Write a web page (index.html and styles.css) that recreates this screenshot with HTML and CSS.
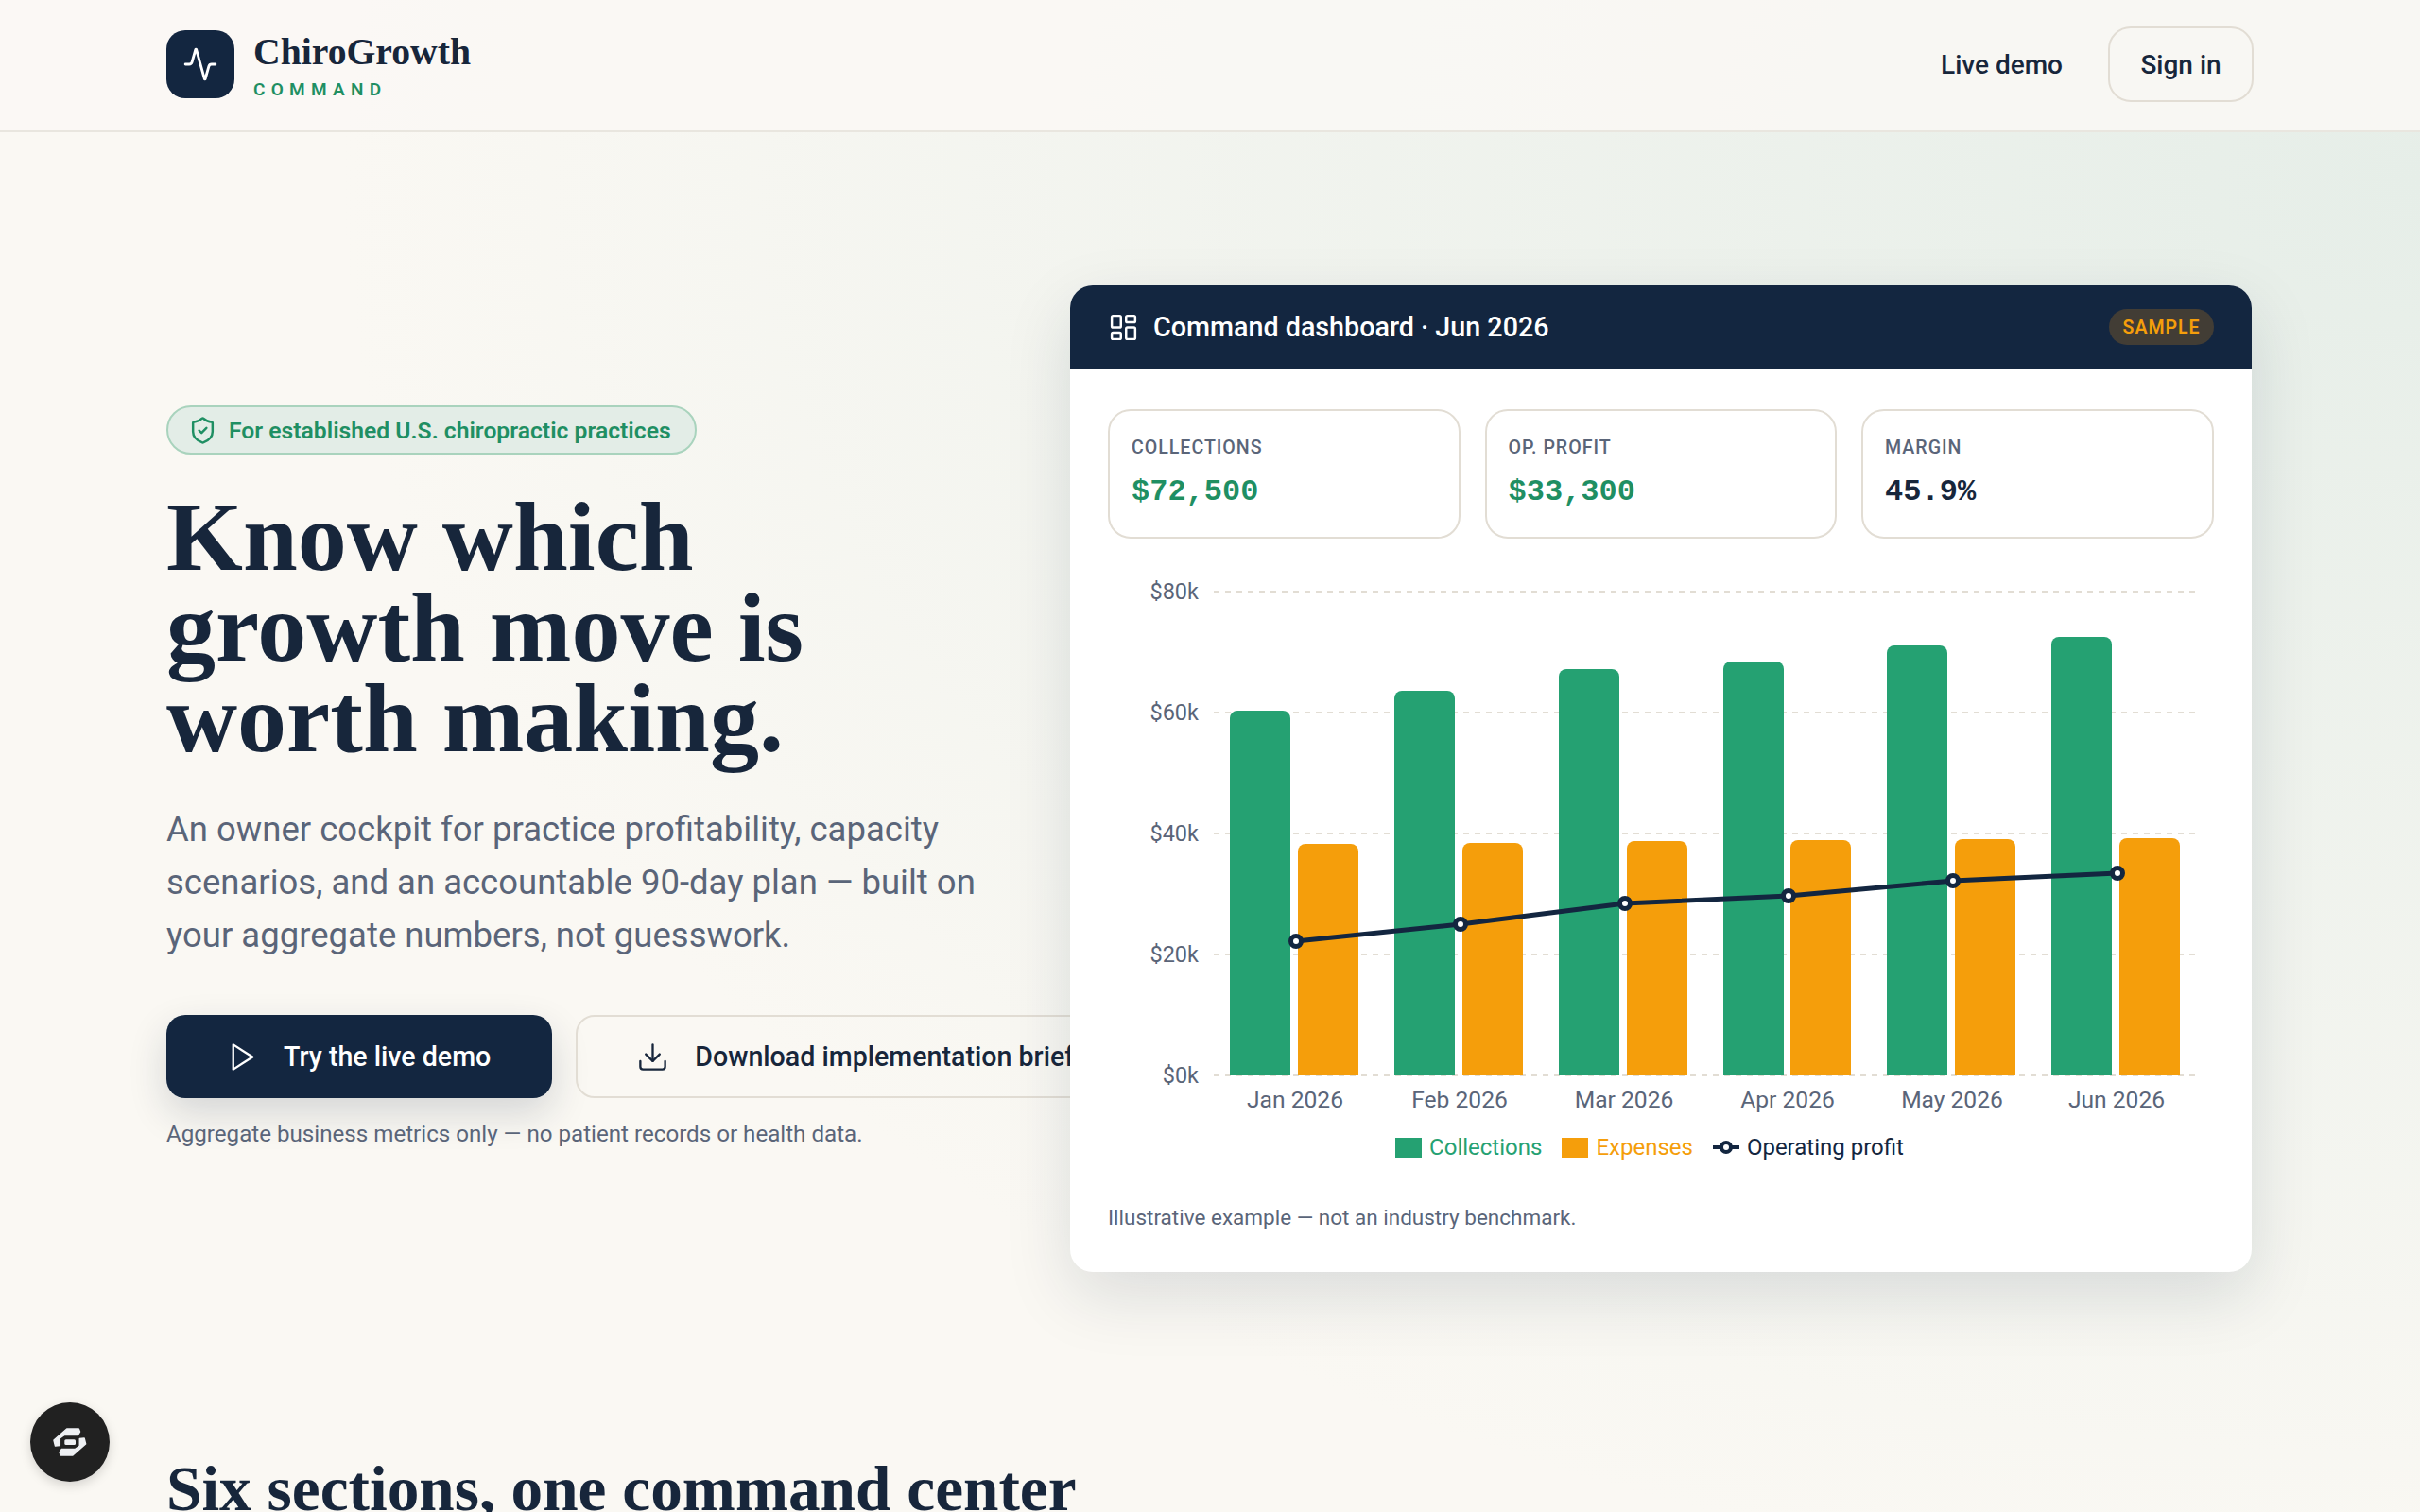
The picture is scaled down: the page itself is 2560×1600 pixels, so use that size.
FILE: index.html
```html
<!DOCTYPE html>
<html lang="en">
<head>
<meta charset="utf-8">
<title>ChiroGrowth Command</title>
<link rel="stylesheet" href="styles.css">
</head>
<body>
<header class="topbar">
  <a class="brand" href="#">
    <span class="brand-mark"><svg class="ico-logo" viewBox="0 0 24 24"><path d="M22 12h-2.48a2 2 0 0 0-1.93 1.46l-2.35 8.36a.25.25 0 0 1-.48 0L9.24 2.18a.25.25 0 0 0-.48 0l-2.35 8.36A2 2 0 0 1 4.49 12H2"/></svg></span>
    <span class="brand-text"><span class="brand-name">ChiroGrowth</span><span class="brand-sub">COMMAND</span></span>
  </a>
  <nav class="nav">
    <a class="nav-link" href="#">Live demo</a>
    <a class="nav-btn" href="#">Sign in</a>
  </nav>
</header>
<main>
  <section class="hero">
    <div class="hero-copy">
      <div class="pill"><svg class="ico ico-pill" viewBox="0 0 24 24"><path d="M20 13c0 5-3.500 7.500-7.660 8.950a1 1 0 0 1-.67-.01C7.500 20.500 4 18 4 13V6a1 1 0 0 1 1-1c2 0 4.500-1.200 6.240-2.720a1.170 1.170 0 0 1 1.520 0C14.510 3.810 17 5 19 5a1 1 0 0 1 1 1z"/><path d="m9 12 2 2 4-4"/></svg>For established U.S. chiropractic practices</div>
      <h1>Know which growth move is worth making.</h1>
      <p class="lead">An owner cockpit for practice profitability, capacity scenarios, and an accountable 90-day plan — built on your aggregate numbers, not guesswork.</p>
      <div class="actions">
        <a class="btn btn-primary" href="#"><svg class="ico" viewBox="0 0 24 24"><polygon points="6 3 20 12 6 21 6 3"/></svg>Try the live demo</a>
        <a class="btn btn-secondary" href="#"><svg class="ico" viewBox="0 0 24 24"><path d="M21 15v4a2 2 0 0 1-2 2H5a2 2 0 0 1-2-2v-4"/><polyline points="7 10 12 15 17 10"/><line x1="12" y1="15" x2="12" y2="3"/></svg>Download implementation brief</a>
      </div>
      <p class="fineprint">Aggregate business metrics only — no patient records or health data.</p>
    </div>
    <div class="dash">
      <div class="dash-head">
        <div class="dash-title"><svg class="ico" viewBox="0 0 24 24"><rect x="3" y="3" width="7" height="9" rx="1"/><rect x="14" y="3" width="7" height="5" rx="1"/><rect x="14" y="12" width="7" height="9" rx="1"/><rect x="3" y="16" width="7" height="5" rx="1"/></svg>Command dashboard · Jun 2026</div>
        <span class="badge">SAMPLE</span>
      </div>
      <div class="dash-body">
        <div class="stats">
          <div class="stat"><div class="stat-label">COLLECTIONS</div><div class="stat-value green">$72,500</div></div>
          <div class="stat"><div class="stat-label">OP. PROFIT</div><div class="stat-value green">$33,300</div></div>
          <div class="stat"><div class="stat-label">MARGIN</div><div class="stat-value">45.9%</div></div>
        </div>
        <svg class="chart" viewBox="1172 590 1170 590">
          <g class="grid">
            <line x1="1284" x2="2324" y1="626" y2="626"/>
            <line x1="1284" x2="2324" y1="754" y2="754"/>
            <line x1="1284" x2="2324" y1="882" y2="882"/>
            <line x1="1284" x2="2324" y1="1010" y2="1010"/>
            <line x1="1284" x2="2324" y1="1138" y2="1138"/>
          </g>
          <g class="axis-y">
            <text x="1268" y="634">$80k</text>
            <text x="1268" y="762">$60k</text>
            <text x="1268" y="890">$40k</text>
            <text x="1268" y="1018">$20k</text>
            <text x="1268" y="1146">$0k</text>
          </g>
          <g class="bars-c">
            <path d="M1301 1138V760a8 8 0 0 1 8-8h48a8 8 0 0 1 8 8v378z"/>
            <path d="M1475 1138V739a8 8 0 0 1 8-8h48a8 8 0 0 1 8 8v399z"/>
            <path d="M1649 1138V716a8 8 0 0 1 8-8h48a8 8 0 0 1 8 8v422z"/>
            <path d="M1823 1138V708a8 8 0 0 1 8-8h48a8 8 0 0 1 8 8v430z"/>
            <path d="M1996 1138V691a8 8 0 0 1 8-8h48a8 8 0 0 1 8 8v447z"/>
            <path d="M2170 1138V682a8 8 0 0 1 8-8h48a8 8 0 0 1 8 8v456z"/>
          </g>
          <g class="bars-e">
            <path d="M1373 1138V901a8 8 0 0 1 8-8h48a8 8 0 0 1 8 8v237z"/>
            <path d="M1547 1138V900a8 8 0 0 1 8-8h48a8 8 0 0 1 8 8v238z"/>
            <path d="M1721 1138V898a8 8 0 0 1 8-8h48a8 8 0 0 1 8 8v240z"/>
            <path d="M1894 1138V897a8 8 0 0 1 8-8h48a8 8 0 0 1 8 8v241z"/>
            <path d="M2068 1138V896a8 8 0 0 1 8-8h48a8 8 0 0 1 8 8v242z"/>
            <path d="M2242 1138V895a8 8 0 0 1 8-8h48a8 8 0 0 1 8 8v243z"/>
          </g>
          <polyline class="profit" points="1371,996 1545,978 1719,956 1892,948 2066,932 2240,924"/>
          <g class="dots">
            <circle cx="1371" cy="996" r="5.500"/><circle cx="1545" cy="978" r="5.500"/><circle cx="1719" cy="956" r="5.500"/><circle cx="1892" cy="948" r="5.500"/><circle cx="2066" cy="932" r="5.500"/><circle cx="2240" cy="924" r="5.500"/>
          </g>
          <g class="axis-x">
            <text x="1370" y="1172">Jan 2026</text>
            <text x="1544" y="1172">Feb 2026</text>
            <text x="1718" y="1172">Mar 2026</text>
            <text x="1891" y="1172">Apr 2026</text>
            <text x="2065" y="1172">May 2026</text>
            <text x="2239" y="1172">Jun 2026</text>
          </g>
        </svg>
        <div class="legend">
          <span class="leg leg-c"><i class="swatch swatch-c"></i>Collections</span>
          <span class="leg leg-e"><i class="swatch swatch-e"></i>Expenses</span>
          <span class="leg leg-p"><svg class="leg-line" viewBox="0 0 28 16"><line x1="0" x2="28" y1="8" y2="8"/><circle cx="14" cy="8" r="5"/></svg>Operating profit</span>
        </div>
        <p class="dash-note">Illustrative example — not an industry benchmark.</p>
      </div>
    </div>
  </section>
  <section class="sections">
    <h2>Six sections, one command center</h2>
  </section>
</main>
<a class="float-badge" href="#" aria-label="Assistant"><svg viewBox="0 0 36 30"><path d="M1 13 14.700 1H27.300L28.500 4 26.300 7.500H12.300L7.300 11V18.500L2.500 19Z"/><path d="M34.600 17 20.900 29H8.300L7.100 26 9.300 22.500H23.300L28.300 19V11.500L33.100 11Z"/><rect x="12.300" y="12.300" width="11.700" height="5.700" rx="1.500"/></svg></a>
</body>
</html>
```
FILE: styles.css
```css
* { box-sizing: border-box; }
html, body { margin: 0; padding: 0; }
html { overflow: hidden; height: 100%; }
body {
  height: 100%;
  overflow: hidden;
  font-family: "Roboto", "Liberation Sans", sans-serif;
  color: #17263b;
  background:
    radial-gradient(2200px 1500px at 100% 12%, #e6eee8 0%, rgba(230,238,232,0) 100%),
    #faf8f3;
}
a { color: inherit; text-decoration: none; }

.topbar {
  height: 140px;
  padding: 0 176px 2px;
  display: flex;
  align-items: center;
  justify-content: space-between;
  background: rgba(250,248,244,.85);
  border-bottom: 2px solid #e9e6df;
}
.brand { display: flex; align-items: center; gap: 20px; }
.brand-mark {
  width: 72px; height: 72px;
  border-radius: 20px;
  background: #132640;
  display: flex; align-items: center; justify-content: center;
}
.ico-logo { width: 38px; height: 38px; fill: none; stroke: #fff; stroke-width: 1.8; stroke-linecap: round; stroke-linejoin: round; }
.brand-text { display: flex; flex-direction: column; }
.brand-name { font: 700 39.700px/44px "Liberation Serif", serif; color: #17263b; }
.brand-sub { font-size: 19px; line-height: 24px; font-weight: 600; letter-spacing: .33em; color: #1f8f63; margin-top: 6px; margin-bottom: -3px; }
.nav { display: flex; align-items: center; gap: 48px; }
.nav-link, .nav-btn { font-size: 28px; font-weight: 500; }
.nav-btn { height: 80px; width: 154px; display: flex; align-items: center; justify-content: center; border: 2px solid #e2ddd4; border-radius: 24px; }

.hero {
  display: grid;
  grid-template-columns: minmax(0, 1fr) 1250px;
  align-items: center;
  gap: 0;
  padding: 162px 178px 0 176px;
}
.hero-copy { min-width: 0; }
.pill {
  display: inline-flex; align-items: center; gap: 12px;
  height: 52px; padding: 0 25px 0 21px;
  background: #e3ede7;
  border: 2px solid #a9d3bd;
  border-radius: 26px;
  font-size: 24.700px; font-weight: 600; color: #1f8f63;
}
.ico { width: 35px; height: 35px; flex: none; fill: none; stroke: currentColor; stroke-width: 1.600; stroke-linecap: round; stroke-linejoin: round; }
.pill .ico { width: 31px; height: 31px; stroke-width: 1.900; }
h1 {
  margin: 39px 0 0;
  width: 800px;
  font: 700 104px/96px "Liberation Serif", serif;
  color: #17263b;
}
.lead { margin: 42px 0 0; width: 900px; font-size: 36.500px; line-height: 56px; color: #5a6579; }
.actions { display: flex; gap: 25px; margin-top: 56px; white-space: nowrap; }
.btn { height: 88px; padding: 0 65px 0 62px; display: flex; align-items: center; gap: 27px; border-radius: 20px; font-size: 28.600px; font-weight: 500; }
.btn-primary { background: #132640; color: #fff; box-shadow: 0 16px 40px rgba(19,38,64,.16); }
.btn-secondary { border: 2px solid #e2ddd4; }
.fineprint { margin: 21px 0 2px; font-size: 24.150px; line-height: 34px; color: #5a6579; }

.dash {
  position: relative; z-index: 1;
  background: #fff;
  border-radius: 24px;
  overflow: hidden;
  box-shadow: 0 25px 70px rgba(19,38,64,.13);
}
.dash-head {
  height: 88px; padding: 0 40px;
  display: flex; align-items: center; justify-content: space-between;
  background: #132640; color: #fff;
}
.dash-title { display: flex; align-items: center; gap: 15px; font-size: 28.700px; font-weight: 500; }
.dash-title .ico { width: 33px; height: 33px; stroke-width: 1.800; }
.badge { height: 38px; width: 111px; border-radius: 19px; background: #423d35; color: #f59e0b; font-size: 19.500px; font-weight: 600; letter-spacing: .05em; display: flex; align-items: center; justify-content: center; }
.dash-body { padding: 43px 40px 42px; }
.stats { display: grid; grid-template-columns: repeat(3, 1fr); gap: 25.600px; }
.stat { height: 137px; padding: 26px 23px; border: 2px solid #e2ddd4; border-radius: 24px; }
.stat-label { font-size: 19.600px; line-height: 26px; font-weight: 500; letter-spacing: .05em; color: #5a6579; }
.stat-value { margin-top: 13px; font: 700 32px/42px "Liberation Mono", monospace; color: #17263b; }
.stat-value.green { color: #1f8f63; }
.chart { display: block; width: 1170px; height: 590px; margin-top: 20px; }
.grid line { stroke: #e2ddd4; stroke-width: 2; stroke-dasharray: 6 6; }
.axis-y text, .axis-x text { fill: #5a6579; }
.axis-y text { font-size: 23.500px; text-anchor: end; }
.axis-x text { font-size: 24.600px; text-anchor: middle; }
.bars-c path { fill: #25a172; }
.bars-e path { fill: #f59e0b; }
.profit { fill: none; stroke: #132640; stroke-width: 5; }
.dots circle { fill: #fff; stroke: #132640; stroke-width: 5; }
.legend { display: flex; justify-content: center; align-items: center; gap: 21px; padding-right: 24px; margin-top: 17px; font-size: 24px; line-height: 34px; }
.leg { display: flex; align-items: center; gap: 8px; }
.leg-c { color: #25a172; }
.leg-e { color: #f59e0b; }
.leg-p { color: #132640; }
.swatch { width: 28px; height: 21px; display: block; }
.swatch-c { background: #25a172; }
.swatch-e { background: #f59e0b; }
.leg-line { width: 28px; height: 16px; }
.leg-line line { stroke: #132640; stroke-width: 4; }
.leg-line circle { fill: #fff; stroke: #132640; stroke-width: 4; }
.dash-note { margin: 41px 0 0; font-size: 22.500px; line-height: 32px; color: #5a6579; }

.sections { padding: 192px 176px 0; }
h2 { margin: 0; font: 700 67.300px/76px "Liberation Serif", serif; color: #17263b; }

.float-badge {
  position: fixed; left: 32px; top: 1484px;
  width: 84px; height: 84px; border-radius: 50%;
  background: #212121;
  box-shadow: 0 4px 12px rgba(0,0,0,.15);
  display: flex; align-items: center; justify-content: center;
}
.float-badge svg { width: 36px; height: 30px; fill: #eef0f3; stroke: #eef0f3; stroke-width: 1.500; stroke-linejoin: round; }
.float-badge rect { stroke: none; }
```
